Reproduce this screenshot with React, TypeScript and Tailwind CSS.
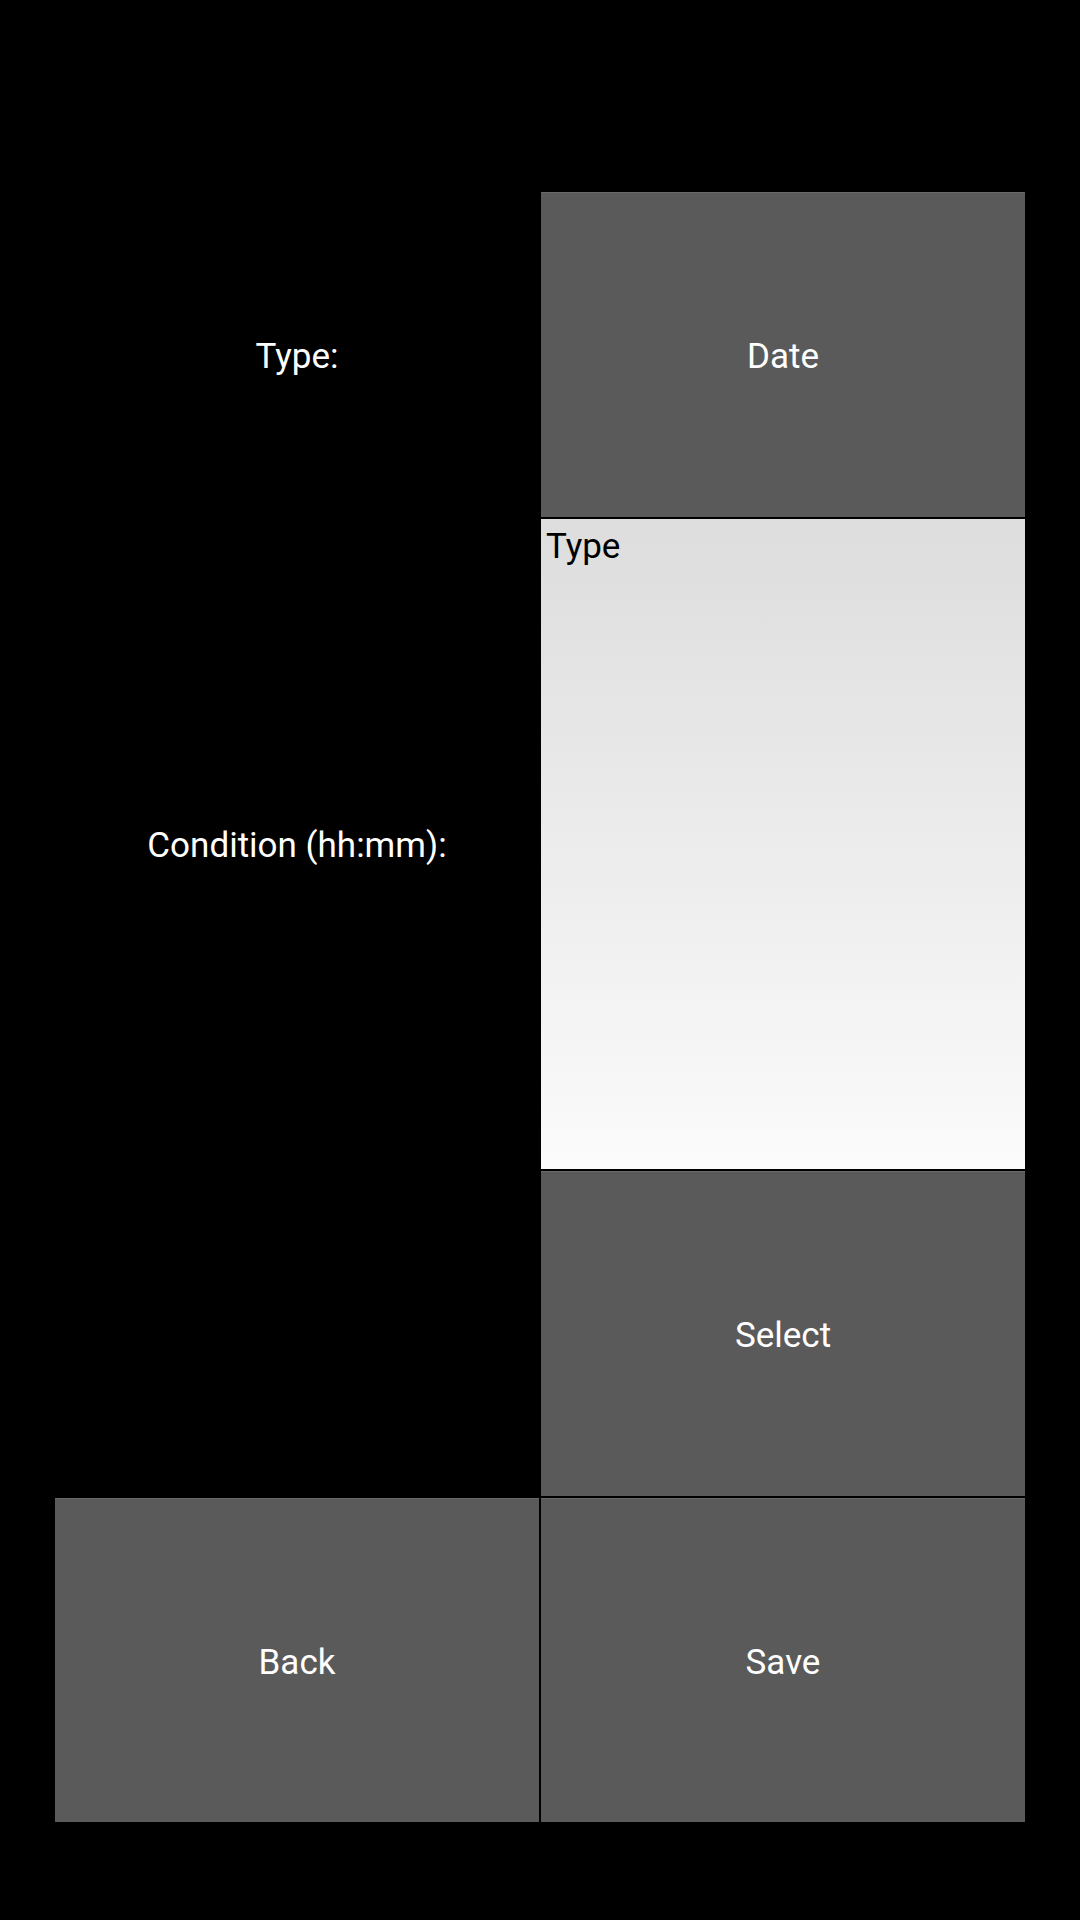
export default function App() {
  return (
    <div className="min-h-[1920px] w-[1080px] bg-black pt-[192px] pl-[55px] font-['Roboto',sans-serif]">
      <div className="grid grid-cols-[484px_484px] grid-rows-[325px_650px_325px_324px] gap-[2px]">
        <div className="flex items-center justify-center pt-[5px] text-[35px] text-white">Type:</div>
        <button className="flex items-center justify-center border-t border-[#6a6a6a] bg-[#5a5a5a] pt-[5px] text-[35px] text-white">
          Date
        </button>

        <div className="flex items-center justify-center pt-[5px] text-[35px] text-white">Condition (hh:mm):</div>
        <div className="bg-gradient-to-b from-[#dddddd] to-[#fbfbfb] px-[5px] pt-[4px] text-[35px] leading-[48px] text-black">
          Type
        </div>

        <div />
        <button className="flex items-center justify-center border-t border-[#6a6a6a] bg-[#5a5a5a] pt-[5px] text-[35px] text-white">
          Select
        </button>

        <button className="flex items-center justify-center border-t border-[#6a6a6a] bg-[#5a5a5a] pt-[5px] text-[35px] text-white">
          Back
        </button>
        <button className="flex items-center justify-center border-t border-[#6a6a6a] bg-[#5a5a5a] pt-[5px] text-[35px] text-white">
          Save
        </button>
      </div>
    </div>
  );
}
